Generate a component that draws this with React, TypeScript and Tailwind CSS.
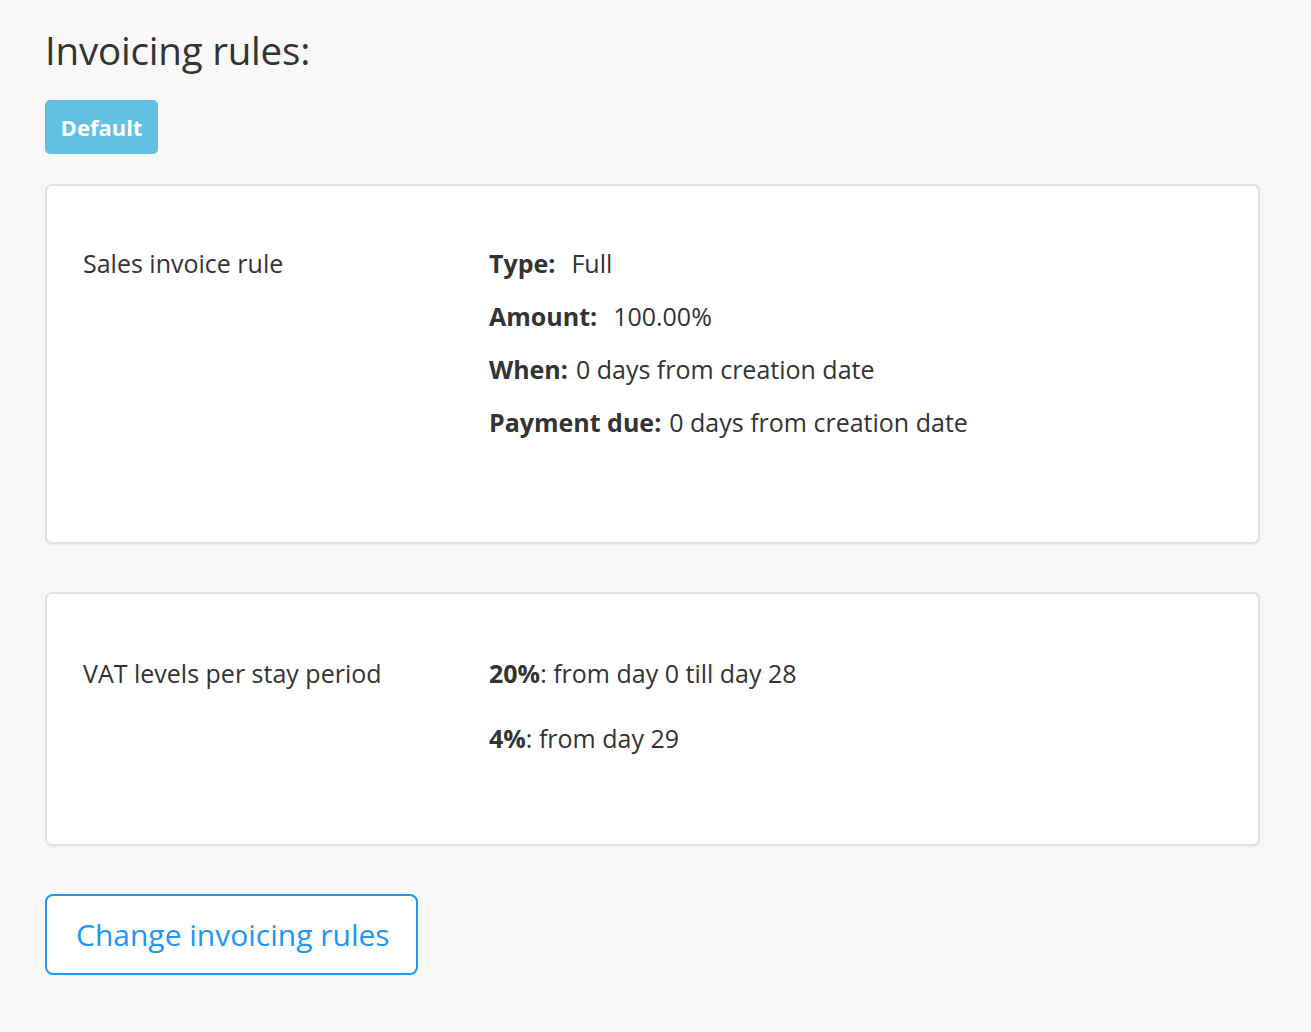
import React from "react";

const labelFont = { fontFamily: '"Open Sans", "Noto Sans", sans-serif' };

function Row({ label, value, gap = "ml-2" }: { label: string; value: string; gap?: string }) {
  return (
    <div className="flex items-baseline">
      <span className="font-bold text-[#333]">{label}</span>
      <span className={`${gap} text-[#333]`}>{value}</span>
    </div>
  );
}

export default function App() {
  return (
    <div
      className="min-h-screen bg-[#f8f8f8] px-[45px] pt-[24px] pb-10 text-[#333]"
      style={labelFont}
    >
      <h1 className="text-[38.5px] font-normal leading-[52px] text-[#333] tracking-[-0.2px]">
        Invoicing rules:
      </h1>

      <div className="mt-[24px] inline-flex h-[54px] w-[113px] items-center justify-center rounded-[5px] bg-[#62c1e0] text-[22px] font-bold text-white">
        Default
      </div>

      <div className="mt-[30px] w-[1215px] rounded-[7px] border-2 border-[#e2e2e2] bg-white px-[36px] pt-[57px] pb-[100px] shadow-[0_1px_2px_rgba(0,0,0,0.06)]">
        <div className="flex text-[25px]">
          <div className="w-[406px] leading-[40px]">Sales invoice rule</div>
          <div className="flex flex-col gap-[13px] leading-[40px]">
            <Row label="Type:" value="Full" gap="ml-4" />
            <Row label="Amount:" value="100.00%" gap="ml-4" />
            <Row label="When:" value="0 days from creation date" />
            <Row label="Payment due:" value="0 days from creation date" />
          </div>
        </div>
      </div>

      <div className="mt-[48px] w-[1215px] rounded-[7px] border-2 border-[#e2e2e2] bg-white px-[36px] pt-[59px] pb-[86px] shadow-[0_1px_2px_rgba(0,0,0,0.06)]">
        <div className="flex text-[25px]">
          <div className="w-[406px] leading-[40px]">VAT levels per stay period</div>
          <div className="flex flex-col gap-[25px] leading-[40px]">
            <div>
              <span className="font-bold">20%</span>: from day 0 till day 28
            </div>
            <div>
              <span className="font-bold">4%</span>: from day 29
            </div>
          </div>
        </div>
      </div>

      <button className="mt-[48px] flex h-[81px] w-[373px] items-center rounded-[8px] border-2 border-[#2196f3] bg-white pl-[29px] text-[30px] text-[#2196f3]">
        Change invoicing rules
      </button>
    </div>
  );
}
